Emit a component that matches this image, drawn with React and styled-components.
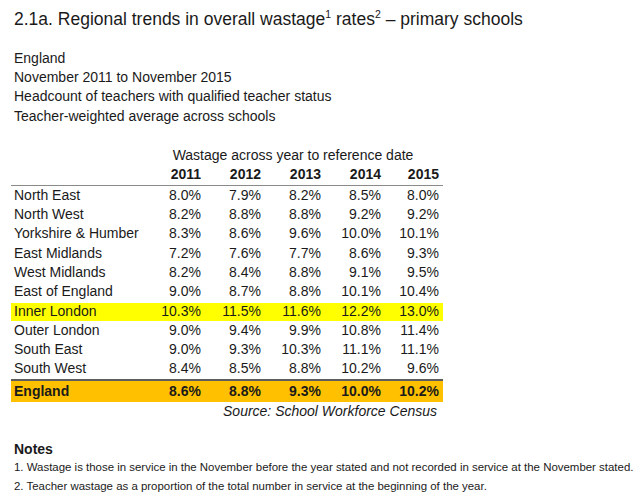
import styled, { createGlobalStyle } from "styled-components";

const GlobalStyle = createGlobalStyle`
  html, body {
    margin: 0;
    padding: 0;
    background: #ffffff;
  }
  body {
    font-family: "Liberation Sans", Arial, sans-serif;
    color: #1a1a1a;
  }
`;

const regions = [
  ["North East", "8.0%", "7.9%", "8.2%", "8.5%", "8.0%"],
  ["North West", "8.2%", "8.8%", "8.8%", "9.2%", "9.2%"],
  ["Yorkshire & Humber", "8.3%", "8.6%", "9.6%", "10.0%", "10.1%"],
  ["East Midlands", "7.2%", "7.6%", "7.7%", "8.6%", "9.3%"],
  ["West Midlands", "8.2%", "8.4%", "8.8%", "9.1%", "9.5%"],
  ["East of England", "9.0%", "8.7%", "8.8%", "10.1%", "10.4%"],
  ["Inner London", "10.3%", "11.5%", "11.6%", "12.2%", "13.0%"],
  ["Outer London", "9.0%", "9.4%", "9.9%", "10.8%", "11.4%"],
  ["South East", "9.0%", "9.3%", "10.3%", "11.1%", "11.1%"],
  ["South West", "8.4%", "8.5%", "8.8%", "10.2%", "9.6%"],
];

const total = ["England", "8.6%", "8.8%", "9.3%", "10.0%", "10.2%"];
const years = ["2011", "2012", "2013", "2014", "2015"];

export default function App() {
  return (
    <>
      <GlobalStyle />
      <Page>
        <Title>
          2.1a. Regional trends in overall wastage<Sup>1</Sup> rates<Sup>2</Sup>{" "}
          – primary schools
        </Title>
        <Meta>
          <div>England</div>
          <div>November 2011 to November 2015</div>
          <div>Headcount of teachers with qualified teacher status</div>
          <div>Teacher-weighted average across schools</div>
        </Meta>

        <Table>
          <thead>
            <tr>
              <HeadCell />
              <CaptionCell colSpan={5}>Wastage across year to reference date</CaptionCell>
            </tr>
            <tr>
              <YearCell />
              {years.map((y) => (
                <YearCell key={y}>{y}</YearCell>
              ))}
            </tr>
          </thead>
          <tbody>
            {regions.map(([name, ...values]) => (
              <Row key={name} $tone={name === "Inner London" ? "highlight" : "plain"}>
                <LabelCell>{name}</LabelCell>
                {values.map((v, i) => (
                  <ValueCell key={i}>{v}</ValueCell>
                ))}
              </Row>
            ))}
            <Row $tone="total">
              <LabelCell>{total[0]}</LabelCell>
              {total.slice(1).map((v, i) => (
                <ValueCell key={i}>{v}</ValueCell>
              ))}
            </Row>
          </tbody>
        </Table>
        <Source>Source: School Workforce Census</Source>

        <Notes>
          <NotesHeading>Notes</NotesHeading>
          <Note>
            1. Wastage is those in service in the November before the year stated and not
            recorded in service at the November stated.
          </Note>
          <Note>
            2. Teacher wastage as a proportion of the total number in service at the beginning
            of the year.
          </Note>
        </Notes>
      </Page>
    </>
  );
}

const Page = styled.main`
  width: 640px;
  height: 501px;
  box-sizing: border-box;
  padding: 9px 0 0 11px;
  overflow: hidden;
`;

const Title = styled.h1`
  margin: 0;
  padding-left: 3px;
  font-size: 17.5px;
  line-height: 20px;
  font-weight: normal;
  white-space: nowrap;
`;

const Sup = styled.sup`
  font-size: 10.5px;
  line-height: 0;
  vertical-align: 7px;
`;

const Meta = styled.div`
  margin-top: 19.8px;
  padding-left: 3px;
  font-size: 14px;
  line-height: 19.3px;
`;

const Table = styled.table`
  margin-top: 20px;
  width: 432px;
  border-collapse: separate;
  border-spacing: 0;
  font-size: 14px;
  table-layout: fixed;

  td:first-child,
  th:first-child {
    width: 132px;
  }
  td:last-child,
  th:last-child {
    padding-right: 4px;
  }
`;

const HeadCell = styled.th`
  padding: 0;
`;

const CaptionCell = styled.th`
  padding: 0 0 0 4px;
  font-weight: normal;
  line-height: 19.3px;
  text-align: center;
  white-space: nowrap;
`;

const YearCell = styled.th`
  padding: 0 2px 0 0;
  font-weight: bold;
  line-height: 19.5px;
  text-align: right;
  border-bottom: 1px solid #8a8a8a;
`;

const tones = {
  plain: { bg: "transparent", weight: "normal" },
  highlight: { bg: "#ffff00", weight: "normal" },
  total: { bg: "#ffc000", weight: "bold" },
};

const Row = styled.tr`
  td {
    background: ${(p) => tones[p.$tone].bg};
    font-weight: ${(p) => tones[p.$tone].weight};
    line-height: ${(p) => (p.$tone === "total" ? "21px" : "19.3px")};
    box-shadow: ${(p) => (p.$tone === "highlight" ? "inset 0 1px 0 #ffffff" : "none")};
    border-top: ${(p) => (p.$tone === "total" ? "2px solid #5e5e5e" : "0")};
  }
`;

const LabelCell = styled.td`
  padding: 0 0 0 3px;
  white-space: nowrap;
`;

const ValueCell = styled.td`
  padding: 0 2px 0 0;
  text-align: right;
  white-space: nowrap;
`;

const Source = styled.div`
  width: 432px;
  box-sizing: border-box;
  padding-right: 6px;
  font-size: 14px;
  line-height: 19px;
  font-style: italic;
  text-align: right;
`;

const Notes = styled.section`
  margin-top: 20.5px;
  padding-left: 3px;
`;

const NotesHeading = styled.h2`
  margin: 0;
  font-size: 14px;
  line-height: 17px;
  font-weight: bold;
`;

const Note = styled.p`
  margin: 0;
  font-size: 11.45px;
  line-height: 18.5px;
  white-space: nowrap;
`;
